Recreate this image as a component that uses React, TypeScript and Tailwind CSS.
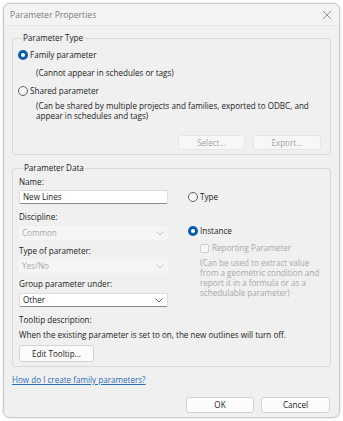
import React from "react";

function Radio({ checked }: { checked?: boolean }) {
  return checked ? (
    <span className="flex h-[10px] w-[10px] shrink-0 items-center justify-center rounded-full bg-[#0a5cb0]">
      <span className="h-[4px] w-[4px] rounded-full bg-white" />
    </span>
  ) : (
    <span className="h-[10px] w-[10px] shrink-0 rounded-full border border-[#5f5f5f] bg-[#f7f7f7]" />
  );
}

function Chevron({ color }: { color: string }) {
  return (
    <svg width="8" height="5" viewBox="0 0 8 5" fill="none">
      <path d="M0.5 0.5 L4 4 L7.5 0.5" stroke={color} strokeWidth="0.9" />
    </svg>
  );
}

export default function App() {
  return (
    <div
      className="h-[421px] w-[343px] whitespace-nowrap bg-white p-[3px] text-[8.1px] leading-[10px] text-[#1b1b1b]"
      style={{ fontFamily: '"Open Sans", "Noto Sans", sans-serif' }}
    >
      <div className="flex h-[415px] w-[337px] flex-col overflow-hidden rounded-[7px] border border-[#c9c9c9] bg-[#f0f0f0] shadow-[0_0_3px_rgba(0,0,0,0.15)]">
        {/* title bar */}
        <div className="flex h-[22px] shrink-0 items-center justify-between border-b border-[#e6e6e6] bg-[#f3f3f3] pl-[6px] pr-[6px]">
          <span className="text-[8.6px] text-[#7b7b7b]">Parameter Properties</span>
          <svg width="10" height="10" viewBox="0 0 10 10" className="mr-[1px]">
            <path d="M1 1 L9 9 M9 1 L1 9" stroke="#8a8a8a" strokeWidth="0.9" />
          </svg>
        </div>

        <div className="flex flex-col px-[8px] pt-[7px]">
          {/* Parameter Type */}
          <fieldset className="rounded-[3px] border border-[#d9d9d9] pb-[4px] pl-[5px] pr-[9px]">
            <legend className="ml-[4px] px-[1px] leading-[10px] text-[#1b1b1b]">Parameter Type</legend>
            <div className="mt-[6px] flex h-[12px] items-center gap-[2px]">
              <Radio checked />
              <span>Family parameter</span>
            </div>
            <div className="mt-[6px] flex h-[12px] items-center pl-[18px]">
              (Cannot appear in schedules or tags)
            </div>
            <div className="mt-[6px] flex h-[12px] items-center gap-[2px]">
              <Radio />
              <span>Shared parameter</span>
            </div>
            <div className="mt-[4px] pl-[18px] leading-[10px]">
              (Can be shared by multiple projects and families, exported to ODBC, and
              <br />
              appear in schedules and tags)
            </div>
            <div className="mt-[14px] flex justify-end gap-[8px]">
              <div className="flex h-[15px] w-[67px] items-center justify-center rounded-[3px] border border-[#e6e6e6] bg-[#f7f7f7] text-[#a3a3a3]">
                Select...
              </div>
              <div className="flex h-[15px] w-[68px] items-center justify-center rounded-[3px] border border-[#e6e6e6] bg-[#f7f7f7] text-[#a3a3a3]">
                Export...
              </div>
            </div>
          </fieldset>

          {/* Parameter Data */}
          <fieldset className="mt-[8px] rounded-[3px] border border-[#d9d9d9] pb-[4px] pl-[6px] pr-[9px]">
            <legend className="ml-[4px] px-[1px] leading-[10px]">Parameter Data</legend>
            <div className="flex gap-[20px]">
              {/* left column */}
              <div className="flex w-[149px] flex-col">
                <div className="mt-[3px] flex h-[12px] items-center">Name:</div>
                <div className="mt-[2px] flex h-[14px] items-center rounded-[2px] border border-[#dcdcdc] border-b-[#8a8a8a] bg-white pl-[3px]">
                  New Lines
                </div>
                <div className="mt-[7px] flex h-[12px] items-center">Discipline:</div>
                <div className="mt-[3px] flex h-[14px] items-center justify-between rounded-[2px] bg-[#f5f5f5] pl-[3px] pr-[4px] text-[#a8a8a8]">
                  <span>Common</span>
                  <Chevron color="#c0c0c0" />
                </div>
                <div className="mt-[5px] flex h-[12px] items-center">Type of parameter:</div>
                <div className="mt-[2px] flex h-[14px] items-center justify-between rounded-[2px] bg-[#f5f5f5] pl-[3px] pr-[4px] text-[#a8a8a8]">
                  <span>Yes/No</span>
                  <Chevron color="#c0c0c0" />
                </div>
                <div className="mt-[5px] flex h-[12px] items-center">Group parameter under:</div>
                <div className="mt-[3px] flex h-[14px] items-center justify-between rounded-[2px] border border-[#dcdcdc] border-b-[#8a8a8a] bg-white pl-[3px] pr-[4px]">
                  <span>Other</span>
                  <Chevron color="#555555" />
                </div>
              </div>
              {/* right column */}
              <div className="flex flex-col">
                <div className="mt-[18px] flex h-[12px] items-center gap-[2px]">
                  <Radio />
                  <span>Type</span>
                </div>
                <div className="mt-[22px] flex h-[12px] items-center gap-[2px]">
                  <Radio checked />
                  <span>Instance</span>
                </div>
                <div className="mt-[5px] flex h-[12px] items-center gap-[3px] pl-[12px]">
                  <span className="h-[9px] w-[9px] rounded-[2px] border border-[#cfcfcf] bg-[#f7f7f7]" />
                  <span className="text-[#a8a8a8]">Reporting Parameter</span>
                </div>
                <div className="mt-[4px] pl-[12px] leading-[10px] text-[#a8a8a8]">
                  (Can be used to extract value
                  <br />
                  from a geometric condition and
                  <br />
                  report it in a formula or as a
                  <br />
                  schedulable parameter)
                </div>
              </div>
            </div>
            <div className="mt-[7px] flex h-[12px] items-center">Tooltip description:</div>
            <div className="mt-[3px] flex h-[12px] items-center">
              When the existing parameter is set to on, the new outlines will turn off.
            </div>
            <div className="mt-[4px] flex h-[17px] w-[75px] items-center justify-center rounded-[3px] border border-[#d3d3d3] bg-[#fcfcfc]">
              Edit Tooltip...
            </div>
          </fieldset>

          <div className="mt-[7px] flex h-[12px] items-center">
            <span className="text-[#2a6ebd] underline">How do I create family parameters?</span>
          </div>

          <div className="mt-[11px] flex justify-end gap-[7px] pr-[1px]">
            <div className="flex h-[16px] w-[68px] items-center justify-center rounded-[3px] border border-[#d3d3d3] bg-[#fcfcfc]">
              OK
            </div>
            <div className="flex h-[16px] w-[69px] items-center justify-center rounded-[3px] border border-[#d3d3d3] bg-[#fcfcfc]">
              Cancel
            </div>
          </div>
        </div>
      </div>
    </div>
  );
}
